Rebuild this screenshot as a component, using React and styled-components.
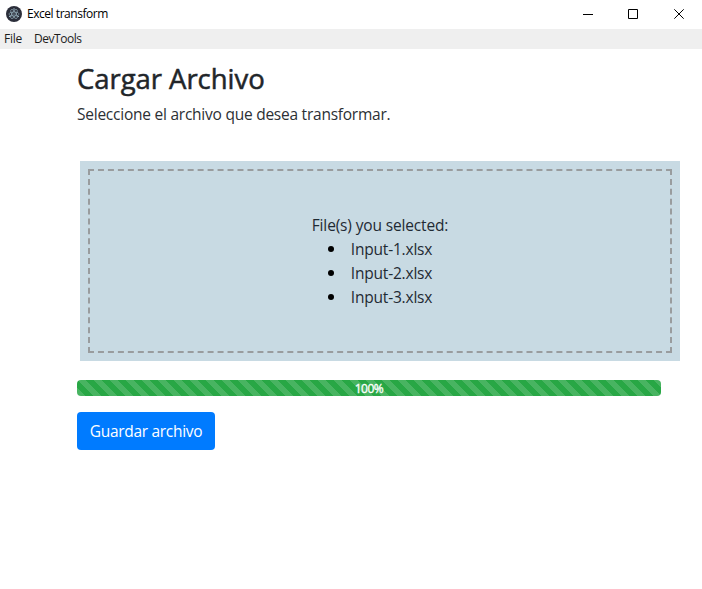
import React from "react";
import styled, { createGlobalStyle } from "styled-components";

const GlobalStyle = createGlobalStyle`
  *, *::before, *::after { box-sizing: border-box; }
  html, body { margin: 0; background: #fff; }
  body {
    font-family: "Segoe UI", "Open Sans", "Noto Sans", sans-serif;
    font-size: 15.5px;
    line-height: 24px;
    color: #212529;
    overflow: hidden;
  }
`;

const Window = styled.div`
  height: 589px;
  display: flex;
  flex-direction: column;
`;

const TitleBar = styled.header`
  height: 29px;
  flex: none;
  display: flex;
  align-items: center;
  padding: 0 0 2px 6px;
`;

const Fitted = styled.span`
  letter-spacing: ${(p) => p.$spacing}px;
  white-space: nowrap;
`;

const Title = styled.div`
  flex: 1;
  margin-left: 5px;
  font-size: 12px;
  line-height: 16px;
  color: #000;
`;

const WindowButton = styled.button`
  width: 45px;
  height: 27px;
  padding: 0;
  border: 0;
  background: none;
  display: flex;
  align-items: center;
  justify-content: center;

  &:last-child {
    width: 47px;
  }
`;

const Controls = styled.div`
  display: flex;
`;

const MenuBar = styled.nav`
  height: 20px;
  flex: none;
  display: flex;
  align-items: center;
  gap: 12px;
  padding-left: 4px;
  background: #efefef;
  font-size: 12px;
  line-height: 20px;
  color: #1c1c1c;
`;

const Content = styled.main`
  display: flex;
  flex-direction: column;
  align-items: flex-start;
  padding: 13px 0 0 77px;
`;

const Heading = styled.h1`
  margin: 0 0 6px;
  font-size: 27.5px;
  line-height: 34px;
  font-weight: 500;
  -webkit-text-stroke: 0.5px #212529;
`;

const Description = styled.p`
  margin: 0 0 35px;
  color: #2c3034;
`;

const DropZone = styled.section`
  width: 600px;
  height: 200px;
  margin-left: 3px;
  display: flex;
  flex-direction: column;
  align-items: center;
  padding-top: 52px;
  background: #c8dae3;
  color: #1f2a33;
  outline: 2px dashed #999c9e;
  outline-offset: -10px;
`;

const FileList = styled.ul`
  margin: 0;
  padding: 0;
  list-style: none;
`;

const FileItem = styled.li`
  display: flex;
  align-items: center;
  gap: 17px;

  &::before {
    content: "";
    width: 6px;
    height: 6px;
    border-radius: 50%;
    background: #000;
  }
`;

const Progress = styled.div`
  width: 584px;
  height: 16px;
  margin: 19px 0 16px;
  border-radius: 4px;
  text-align: center;
  font-size: 12px;
  line-height: 17px;
  color: #fff;
  -webkit-text-stroke: 0.3px #fff;
  background: #28a745 linear-gradient(45deg, rgba(255, 255, 255, 0.15) 25%, transparent 25%, transparent 50%, rgba(255, 255, 255, 0.15) 50%, rgba(255, 255, 255, 0.15) 75%, transparent 75%, transparent) 0 0 / 16px 16px;
`;

const SaveButton = styled.button`
  width: 138px;
  height: 38px;
  padding: 0;
  border: 0;
  border-radius: 4px;
  background: #007bff;
  color: #fff;
  font: inherit;
`;

const AppIcon = () => (
  <svg width="16" height="16" viewBox="0 0 16 16" fill="none">
    <circle cx="8" cy="8" r="8" fill="#2b2e3a" />
    <g stroke="#b4d3df" strokeWidth="0.6" opacity="0.85">
      <ellipse cx="8" cy="8" rx="5.2" ry="2" />
      <ellipse cx="8" cy="8" rx="5.2" ry="2" transform="rotate(60 8 8)" />
      <ellipse cx="8" cy="8" rx="5.2" ry="2" transform="rotate(120 8 8)" />
    </g>
    <g fill="#b4d3df">
      <circle cx="8" cy="8" r="0.6" />
      <circle cx="3.8" cy="10.4" r="0.7" />
      <circle cx="12.2" cy="10.4" r="0.7" />
      <circle cx="8" cy="2.9" r="0.7" />
    </g>
  </svg>
);

const controls = [
  { label: "Minimize", d: "M0 5.5H10" },
  { label: "Maximize", d: "M0.5 0.5H9.5V9.5H0.5Z" },
  { label: "Close", d: "M0.3 0.3L9.7 9.7M9.7 0.3L0.3 9.7" },
];

const files = ["Input-1.xlsx", "Input-2.xlsx", "Input-3.xlsx"];

export default function App() {
  return (
    <Window>
      <GlobalStyle />
      <TitleBar>
        <AppIcon />
        <Title><Fitted $spacing={-0.46}>Excel transform</Fitted></Title>
        <Controls>
          {controls.map((c) => (
            <WindowButton key={c.label} aria-label={c.label}>
              <svg width="10" height="10" viewBox="0 0 10 10" fill="none" stroke="#000">
                <path d={c.d} />
              </svg>
            </WindowButton>
          ))}
        </Controls>
      </TitleBar>
      <MenuBar>
        <Fitted $spacing={-0.25}>File</Fitted>
        <Fitted $spacing={-0.45}>DevTools</Fitted>
      </MenuBar>
      <Content>
        <Heading><Fitted $spacing={-0.05}>Cargar Archivo</Fitted></Heading>
        <Description><Fitted $spacing={-0.24}>Seleccione el archivo que desea transformar.</Fitted></Description>
        <DropZone>
          <Fitted $spacing={-0.15}>File(s) you selected:</Fitted>
          <FileList>
            {files.map((name) => (
              <FileItem key={name}><Fitted $spacing={-0.2}>{name}</Fitted></FileItem>
            ))}
          </FileList>
        </DropZone>
        <Progress><Fitted $spacing={-0.5}>100%</Fitted></Progress>
        <SaveButton><Fitted $spacing={-0.3}>Guardar archivo</Fitted></SaveButton>
      </Content>
    </Window>
  );
}
